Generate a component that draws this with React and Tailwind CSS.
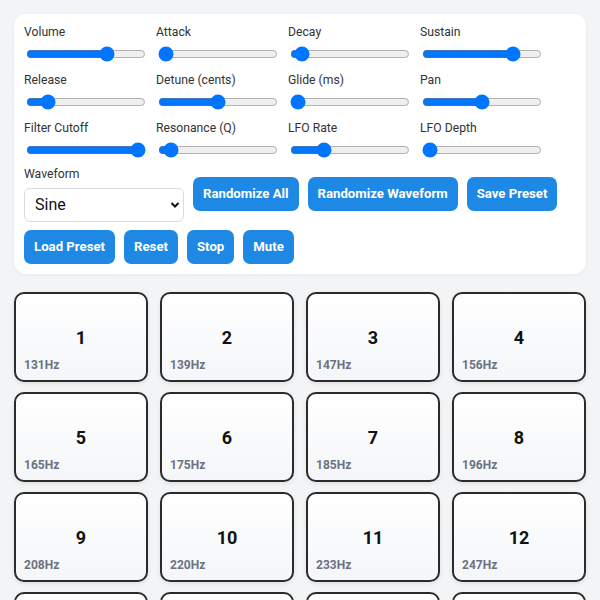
import React from "react";

const sliders = [
  ["Volume", 70],
  ["Attack", 0],
  ["Decay", 4],
  ["Sustain", 80],
  ["Release", 13],
  ["Detune (cents)", 50],
  ["Glide (ms)", 0],
  ["Pan", 50],
  ["Filter Cutoff", 100],
  ["Resonance (Q)", 5],
  ["LFO Rate", 25],
  ["LFO Depth", 0],
];

const pads = [131, 139, 147, 156, 165, 175, 185, 196, 208, 220, 233, 247, 262, 277, 294, 311];

function Btn({ children }) {
  return (
    <button className="rounded-[7px] bg-[#1e88e5] px-[10px] h-[34px] text-[13.2px] font-bold text-white leading-none whitespace-nowrap">
      {children}
    </button>
  );
}

export default function App() {
  return (
    <div
      className="min-h-[600px] bg-[#f3f4f6] p-[14px] text-[#222]"
      style={{ fontFamily: "Roboto, 'Liberation Sans', sans-serif" }}
    >
      <div className="rounded-[12px] bg-white p-[10px] shadow-[0_1px_4px_rgba(0,0,0,0.05)]">
        <div className="grid grid-cols-[120px_120px_120px_120px] gap-x-[12px] gap-y-[10px]">
          {sliders.map(([label, v]) => (
            <div key={label} className="flex flex-col">
              <label className="text-[12.2px] leading-[16px] text-[#333]">{label}</label>
              <input
                type="range"
                min="0"
                max="100"
                defaultValue={v}
                className="h-4 w-full accent-[#0075ff]"
                style={{ margin: "6px 0 0 2px" }}
              />
            </div>
          ))}
        </div>
        <div className="mt-[8px] flex flex-wrap items-center gap-x-[9px] gap-y-[8px]">
          <div className="flex w-[160px] flex-col">
            <label className="text-[12.2px] leading-[16px] text-[#333]">Waveform</label>
            <div className="relative mt-[6px]">
              <select className="h-[34px] w-[160px] appearance-none rounded-[6px] border border-[#dcdcdc] bg-white pl-[10px] text-[16px] text-[#111] outline-none">
                <option>Sine</option>
              </select>
              <svg
                className="pointer-events-none absolute right-[4px] top-[13px]"
                width="10"
                height="8"
                viewBox="0 0 10 8"
              >
                <path d="M1.5 2 L5 5.5 L8.5 2" fill="none" stroke="#111" strokeWidth="2" />
              </svg>
            </div>
          </div>
          <Btn>Randomize All</Btn>
          <Btn>Randomize Waveform</Btn>
          <Btn>Save Preset</Btn>
          <Btn>Load Preset</Btn>
          <Btn>Reset</Btn>
          <Btn>Stop</Btn>
          <Btn>Mute</Btn>
        </div>
      </div>
      <div className="mt-[18px] grid grid-cols-4 gap-x-[12px] gap-y-[10px]">
        {pads.map((hz, i) => (
          <div
            key={i}
            className="relative flex h-[90px] items-center justify-center rounded-[10px] border-2 border-[#2b2b2b] bg-gradient-to-b from-white to-[#f4f6f9] shadow-[0_2px_4px_rgba(0,0,0,0.08)]"
          >
            <span className="text-[18px] font-bold text-[#111]">{i + 1}</span>
            <span className="absolute bottom-[6px] left-[8px] text-[12px] font-bold text-[#6b7280]">
              {hz}Hz
            </span>
          </div>
        ))}
      </div>
    </div>
  );
}
